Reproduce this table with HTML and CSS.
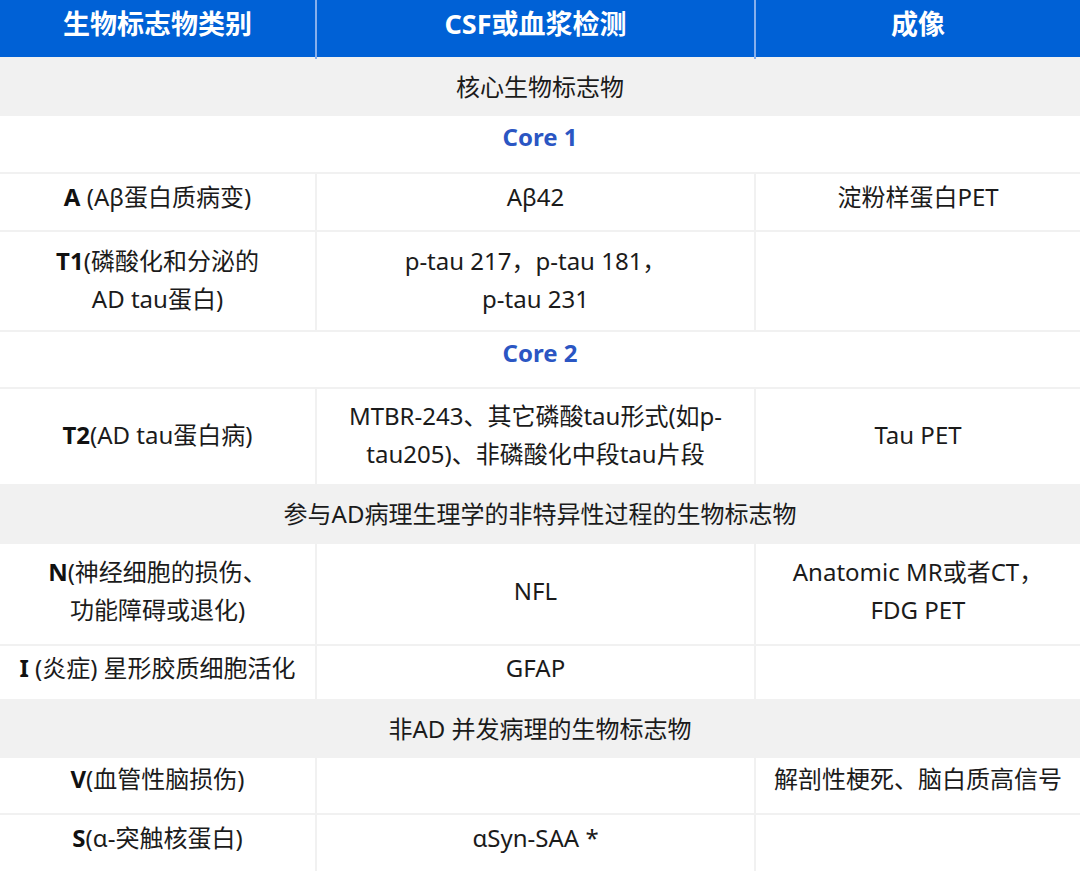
FILE: index.html
```html
<!DOCTYPE html>
<html lang="zh-CN">
<head>
<meta charset="utf-8">
<title>生物标志物类别</title>
<link rel="stylesheet" href="styles.css">
</head>
<body>
<table class="bio">
  <colgroup>
    <col class="c1">
    <col class="c2">
    <col class="c3">
  </colgroup>
  <thead>
    <tr>
      <th>生物标志物类别</th>
      <th>CSF或血浆检测</th>
      <th>成像</th>
    </tr>
  </thead>
  <tbody>
    <tr class="section"><td colspan="3">核心生物标志物</td></tr>
    <tr class="core core-first"><td colspan="3">Core 1</td></tr>
    <tr class="one">
      <td><b>A</b> (Aβ蛋白质病变)</td>
      <td>Aβ42</td>
      <td>淀粉样蛋白PET</td>
    </tr>
    <tr class="tall-a">
      <td><b>T1</b>(磷酸化和分泌的<br>AD tau蛋白)</td>
      <td>p-tau 217，p-tau 181，<br>p-tau 231</td>
      <td></td>
    </tr>
    <tr class="core"><td colspan="3">Core 2</td></tr>
    <tr class="tall-b">
      <td><b>T2</b>(AD tau蛋白病)</td>
      <td>MTBR-243、其它磷酸tau形式(如p-<br>tau205)、非磷酸化中段tau片段</td>
      <td>Tau PET</td>
    </tr>
    <tr class="section section-wide"><td colspan="3">参与AD病理生理学的非特异性过程的生物标志物</td></tr>
    <tr class="tall-c">
      <td><b>N</b>(神经细胞的损伤、<br>功能障碍或退化)</td>
      <td>NFL</td>
      <td>Anatomic MR或者CT，<br>FDG PET</td>
    </tr>
    <tr class="short">
      <td><b>I</b> (炎症) 星形胶质细胞活化</td>
      <td>GFAP</td>
      <td></td>
    </tr>
    <tr class="section"><td colspan="3">非AD 并发病理的生物标志物</td></tr>
    <tr class="mid">
      <td><b>V</b>(血管性脑损伤)</td>
      <td></td>
      <td>解剖性梗死、脑白质高信号</td>
    </tr>
    <tr class="one">
      <td><b>S</b>(α-突触核蛋白)</td>
      <td>αSyn-SAA *</td>
      <td></td>
    </tr>
  </tbody>
</table>
</body>
</html>
```

FILE: styles.css
```css
html, body {
  margin: 0;
  padding: 0;
  background: #ffffff;
}

body {
  font-family: "Noto Sans", "Noto Sans CJK SC", sans-serif;
  color: #1b1b1b;
}

.bio {
  width: 1080px;
  table-layout: fixed;
  border-collapse: collapse;
}

.c1 { width: 316px; }
.c2 { width: 439px; }
.c3 { width: 325px; }

.bio th {
  background: #0061d6;
  color: #ffffff;
  font-weight: 700;
  font-size: 27px;
  line-height: 38px;
  padding: 4.5px 6px 14.5px;
  text-align: center;
  border-left: 2px solid #86afec;
  border-right: 2px solid #86afec;
  border-top: 0;
  border-bottom: 0;
}

.bio th:first-child { border-left: 0; }
.bio th:last-child { border-right: 0; }

.bio td {
  font-size: 24px;
  line-height: 38px;
  padding: 8.5px 6px;
  text-align: center;
  vertical-align: middle;
  border: 2px solid #f1f1f1;
  word-break: keep-all;
}

.bio tr td:first-child { border-left: 0; }
.bio tr td:last-child { border-right: 0; }

.bio b {
  font-weight: 700;
  color: #111111;
}

.section td {
  background: #f1f1f1;
  padding: 8.5px 6px 8.5px;
}

.section-wide td { padding: 9px 6px 9px; }

.core td {
  color: #2b56c3;
  font-weight: 700;
  padding: 2px 6px 15px;
}

.core-first td { padding: 2px 6px 16px; }

.one td { padding: 3.5px 6px 14.5px; }
.tall-a td { padding: 10px 6px 12px; }
.tall-b td { padding: 8px 6px 11px; }
.tall-c td { padding: 9px 6px 15px; }
.short td { padding: 3px 6px 12px; }
.mid td { padding: 2px 6px 15px; }
```
